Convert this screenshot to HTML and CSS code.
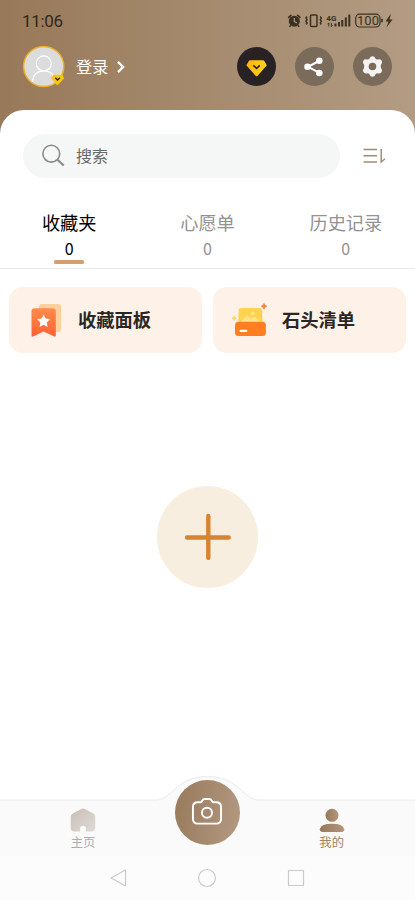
FILE: index.html
```html
<!DOCTYPE html>
<html lang="zh-CN">
<head>
<meta charset="utf-8">
<meta name="viewport" content="width=device-width, initial-scale=1">
<title>我的</title>
<link rel="stylesheet" href="styles.css">
</head>
<body>
<div class="app">
  <header class="header">
    <div class="status">
      <span class="time">11:06</span>
      <svg class="status-icons" width="108" height="18" viewBox="287 12 108 18" fill="none" stroke="#3c3022">
        <circle cx="294.300" cy="21.200" r="5.500" fill="#3c3022" stroke="none"/>
        <path d="M288.200 17.800l3.200-2.900M300.400 17.800l-3.200-2.900M290.700 25.300l-1.200 1.500M297.900 25.300l1.200 1.500" stroke-width="1.700"/>
        <path d="M294.300 18v3.500l2.600 1.600" stroke="#b19b82" stroke-width="1.200"/>
        <rect x="310.500" y="14.900" width="6.500" height="11.500" rx="1" stroke-width="1.500"/>
        <path d="M307 16.500l-1 1.600 1 1.600-1 1.600 1 1.600-1 1.600M320.300 16.500l1 1.600-1 1.600 1 1.600-1 1.600 1 1.600" stroke-width="1.500"/>
        <text x="326.300" y="20.500" class="net">4G</text>
        <path d="M328.800 26.500v-3.500M331.300 23v3.500M327.500 24.300l1.300-1.400M332.600 25.200l-1.300 1.400" stroke-width="1"/>
        <path d="M335.500 26.500v-3M339 26.500v-4.500M342.300 26.500v-6.500M345.800 26.500v-9M349.300 26.500v-12" stroke-width="2"/>
        <rect x="355.700" y="14.200" width="24.300" height="12.800" rx="4" stroke-width="1.200"/>
        <path d="M382 18.700v3.600" stroke-width="1.600"/>
        <text x="368" y="25" class="battery">100</text>
        <path d="M391 13.500l-5.500 8h3L386.500 27.500l6-8h-3z" fill="#3c3022" stroke="none"/>
      </svg>
    </div>
    <div class="user">
      <svg class="avatar" width="44" height="44" viewBox="22 45 44 44">
        <circle cx="43.700" cy="66.500" r="20.100" fill="#dcdcdc" stroke="#e8af29" stroke-width="1.500"/>
        <g fill="none" stroke="#fff" stroke-width="1.200"><circle cx="43.800" cy="63.400" r="7.500"/><path d="M32.300 82c.7-7 5-11.200 11.500-11.200S54.300 75 55.200 81"/></g>
        <path d="M53.300 74.800h8.900l2 3.500-6.700 7.200-6.500-7.200z" fill="#fcc60d"/>
        <path d="M55.200 77.800l2.300 2.200 2.400-2.200" fill="none" stroke="#382b18" stroke-width="1.500"/>
      </svg>
      <span class="login">登录</span>
      <svg class="chevron" width="10" height="14" viewBox="0 0 10 14"><path d="M2 1.800l5 5.200-5 5.200" fill="none" stroke="#fff" stroke-width="2.500"/></svg>
      <div class="actions">
        <span class="action vip"><svg width="39" height="39" viewBox="0 0 39 39"><defs><linearGradient id="gold"><stop stop-color="#ffb60d"/><stop offset="1" stop-color="#ffd51b"/></linearGradient></defs><path d="M13 13.300h13.200q.7 0 1.100.6l2.100 3.500q.5.900-.2 1.700l-8.600 9.700q-1 1.100-2 0L10 19.100q-.7-.8-.2-1.700l2.100-3.500q.4-.6 1.100-.6z" fill="url(#gold)"/><path d="M16.300 18.300l3.300 3 3.200-3" fill="none" stroke="#292225" stroke-width="1.600"/></svg></span>
        <span class="action"><svg width="39" height="39" viewBox="0 0 39 39" fill="#fff"><path d="M25 13.500l-12 6.300 12 6.400" fill="none" stroke="#fff" stroke-width="2"/><circle cx="24.300" cy="13.700" r="3.300"/><circle cx="12.500" cy="19.800" r="3.300"/><circle cx="24.300" cy="26" r="3.300"/></svg></span>
        <span class="action"><svg width="39" height="39" viewBox="0 0 39 39"><path d="M19.500 9.200q2.200 0 2.900 2.300.9 1.200 2.500 1 2.700-.6 3.800 1.300t-.7 3.900q-.6 1.700 0 3.400 1.800 2.100.7 4t-3.800 1.300q-1.600-.2-2.500 1-.7 2.300-2.900 2.300t-2.900-2.300q-.9-1.200-2.500-1-2.700.6-3.800-1.300t.7-4q.6-1.700 0-3.400-1.800-2-.7-3.900t3.800-1.300q1.600.2 2.500-1 .7-2.300 2.900-2.300z" fill="#f4f3f2"/><circle cx="19.500" cy="19.500" r="3.800" fill="#7b6b5a"/></svg></span>
      </div>
    </div>
  </header>

  <main class="panel">
    <div class="search-row">
      <div class="search">
        <svg width="24" height="24" viewBox="0 0 24 24" fill="none" stroke="#888a8c"><circle cx="10.300" cy="9.700" r="8.400" stroke-width="1.600"/><path d="M16.200 15.500l6.500 6" stroke-width="2.200"/></svg>
        <span class="placeholder">搜索</span>
      </div>
      <svg class="sort" width="24" height="18" viewBox="0 0 24 18" fill="none" stroke="#a58a70" stroke-width="1.500"><path d="M.5 2.500H14M.5 8.800H14M.5 15.100H14M18.200 2v13l3.800-3.200"/></svg>
    </div>
    <nav class="tabs">
      <div class="tab active"><span class="name">收藏夹</span><span class="count">0</span></div>
      <div class="tab"><span class="name">心愿单</span><span class="count">0</span></div>
      <div class="tab"><span class="name">历史记录</span><span class="count">0</span></div>
    </nav>
    <div class="cards">
      <div class="card">
        <svg width="36" height="36" viewBox="30 302 36 36"><defs><linearGradient id="mark" x1="0" y1="0" x2="0" y2="1"><stop stop-color="#ff8c4a"/><stop offset="1" stop-color="#ff6235"/></linearGradient></defs>
          <path d="M42 304h16q3 0 3 3v22q0 3-3 3H39v-25q0-3 3-3z" fill="#ffcf9d"/>
          <path d="M34.800 308.200h17.700q3.300 0 3.300 3.300v24q0 1.600-1.500 1l-10.700-5-10.600 5q-1.500.6-1.500-1v-24q0-3.300 3.300-3.300z" fill="url(#mark)"/>
          <path d="M43.600 314.500l2 4.100 4.500.6-3.300 3.200.8 4.500-4-2.200-4 2.200.8-4.500-3.300-3.200 4.500-.6z" fill="#fff"/>
        </svg>
        <span>收藏面板</span>
      </div>
      <div class="card">
        <svg width="36" height="36" viewBox="231 302 36 36">
          <rect x="238.500" y="308" width="23.800" height="20" rx="3" fill="#ffd34f"/>
          <path d="M240.500 322l6.500-7 4.300 4.200 3-3 6 5.800z" fill="#ffe488"/><circle cx="252.800" cy="313.300" r="1.700" fill="#ffe995"/>
          <rect x="235" y="321.800" width="30.900" height="14.300" rx="3.500" fill="#ff7f20"/><rect x="239.500" y="329.800" width="7.800" height="2.300" rx="1.100" fill="#fff"/>
          <path d="M264 303.300q.7 2.500 3 3-2.300.6-3 3.100-.7-2.500-3-3.100 2.300-.5 3-3z" fill="#f88534" stroke="#f88534" stroke-width=".6"/>
          <path d="M234.200 315.800q.6 2 2.300 2.500-1.700.6-2.300 2.500-.6-1.900-2.300-2.500 1.700-.5 2.300-2.500z" fill="#ffd469" stroke="#ffd469" stroke-width=".5"/>
        </svg>
        <span>石头清单</span>
      </div>
    </div>
    <div class="empty">
      <div class="add"><svg width="48" height="48" viewBox="0 0 48 48"><path d="M24.300 3v41.700M3 24.500h41.700" stroke="#d7832f" stroke-width="4.400" stroke-linecap="round"/></svg></div>
    </div>
  </main>

  <footer class="bottom">
    <svg class="hump" width="415" height="28" viewBox="0 0 415 28"><path d="M0 25H156C172 25 176 1.500 207.500 1.500S243 25 259 25H415V28H0z" fill="#fafafa"/><path d="M0 25H156C172 25 176 1.500 207.500 1.500S243 25 259 25H415" fill="none" stroke="#ebebeb"/></svg>
    <div class="nav">
      <div class="nav-item">
        <svg width="26" height="25" viewBox="0 0 26 25"><defs><linearGradient id="home" x2="1" y2="1"><stop stop-color="#c7bfb8"/><stop offset="1" stop-color="#dfdad6"/></linearGradient></defs><path d="M10.800 1.200q2.200-1.200 4.400 0l7.800 4.100q2.200 1.200 2.200 3.500V20q0 3.500-3.500 3.500h-5.800v-3q0-2.700-2.900-2.700t-2.900 2.700v3H4.300Q.8 23.500.8 20V8.800q0-2.300 2.200-3.500z" fill="url(#home)"/></svg>
        <span>主页</span>
      </div>
      <div class="camera">
        <svg width="32" height="29" viewBox="0.500 1 33 29" fill="none" stroke="#fff" stroke-width="2"><path d="M7.500 6h2.700q1 0 1.500-1l.5-.8q.8-1.500 2.300-1.500h5q1.500 0 2.300 1.500l.5.800q.5 1 1.500 1h2.700q5 0 5 5v12q0 5-5 5h-19q-5 0-5-5V11q0-5 5-5z"/><circle cx="17" cy="16.800" r="5.200"/></svg>
      </div>
      <div class="nav-item me">
        <svg width="26" height="25" viewBox="0 0 26 25"><defs><linearGradient id="person"><stop stop-color="#98785a"/><stop offset="1" stop-color="#b2977d"/></linearGradient></defs><g fill="url(#person)"><circle cx="13" cy="7.300" r="6.500"/><path d="M4.300 24q-3.500 0-3.500-2.800Q2 15.800 13 15.800t12.200 5.400q0 2.800-3.500 2.800z"/></g></svg>
        <span>我的</span>
      </div>
    </div>
    <div class="system">
      <svg width="20" height="20" viewBox="0 0 20 20"><path d="M2 10L16.500 2v16z"/></svg>
      <svg width="20" height="20" viewBox="0 0 20 20"><circle cx="10" cy="10" r="8.500"/></svg>
      <svg width="20" height="20" viewBox="0 0 20 20"><rect x="2.500" y="2.500" width="15" height="15"/></svg>
    </div>
  </footer>
</div>
</body>
</html>
```
FILE: styles.css
```css
* { box-sizing: border-box; }
body { margin: 0; font-family: "Noto Sans CJK SC", sans-serif; }
svg { display: block; flex: none; }
.app {
  width: 415px;
  height: 900px;
  display: flex;
  flex-direction: column;
  overflow: hidden;
  background: linear-gradient(90deg, #987959, #b29c83) top / 100% 160px no-repeat #fff;
}
.header { height: 110px; flex: none; }
.status {
  height: 42px;
  padding: 0 20px 0 22px;
  display: flex;
  align-items: center;
  justify-content: space-between;
}
.time { font: 400 17px/20px Roboto, sans-serif; color: #332719; letter-spacing: -.3px; }
.net { font: 700 8px Roboto, sans-serif; fill: #3c3022; stroke: none; }
.battery { font: 400 13px Roboto, sans-serif; fill: #3c3022; stroke: none; text-anchor: middle; }
.user { height: 50px; padding: 0 23.500px 0 22px; display: flex; align-items: center; }
.login { margin-left: 10px; padding-bottom: 2px; color: #fff; font-size: 16.200px; line-height: 24px; }
.chevron { margin-left: 8px; }
.actions { margin-left: auto; padding-bottom: 1px; display: flex; gap: 18.700px; }
.action { width: 39px; height: 39px; border-radius: 50%; background: #7b6b5a; }
.vip { background: #292225; }
.panel {
  flex: 1;
  display: flex;
  flex-direction: column;
  background: #fff;
  border-radius: 24px 24px 0 0;
  padding-top: 24px;
}
.search-row { height: 44px; padding: 0 28px 0 23px; display: flex; align-items: center; justify-content: space-between; }
.search {
  width: 317px;
  height: 44px;
  border-radius: 22px;
  background: #f5f7f6;
  padding-left: 18px;
  display: flex;
  align-items: center;
  gap: 11px;
  font-size: 16px;
  color: #686868;
}
.placeholder { padding-bottom: 2px; }
.tabs { height: 91px; padding-top: 31px; display: flex; border-bottom: 1px solid #e9e9e9; }
.tab { flex: 1; display: flex; flex-direction: column; align-items: center; color: #929292; }
.name { font-size: 18.200px; line-height: 26px; }
.count { width: 30px; height: 27px; font-size: 16px; line-height: 27px; text-align: center; }
.active { color: #000; }
.active::after { content: ""; width: 30px; height: 3.500px; margin-top: -2px; border-radius: 1.500px; background: #d3a06e; }
.cards { display: grid; grid-template-columns: 1fr 1fr; gap: 11px; padding: 18px 9px 0; }
.card {
  height: 66px;
  padding-left: 20.500px;
  display: flex;
  align-items: center;
  gap: 12.500px;
  border-radius: 14px;
  background: #fef1e7;
  font-size: 18.300px;
  font-weight: 700;
  color: #292725;
}
.card span { padding-bottom: 2px; }
.card + .card { padding-left: 18px; gap: 15px; }
.empty { padding-top: 133px; display: flex; justify-content: center; }
.add { width: 101.500px; height: 101.500px; border-radius: 50%; background: #f8eee0; display: grid; place-items: center; }
.bottom { flex: none; height: 125px; }
.nav { height: 53px; background: #fafafa; display: grid; grid-template-columns: 1fr 1fr 1fr; }
.nav-item {
  width: 60px;
  margin-left: 53px;
  padding-top: 5px;
  display: flex;
  flex-direction: column;
  align-items: center;
  font-size: 12.300px;
  line-height: 18px;
  color: #aaaeb5;
}
.me { margin-left: 25px; color: #a08264; }
.camera {
  width: 65px;
  height: 65px;
  margin-top: -23px;
  padding-bottom: 2px;
  justify-self: center;
  position: relative;
  border-radius: 50%;
  background: linear-gradient(100deg, #98795b, #b39a82);
  display: grid;
  place-items: center;
}
.system {
  height: 44px;
  background: #fcfcfc;
  padding: 11.500px 109.500px 0 108.500px;
  display: flex;
  justify-content: space-between;
}
.system svg { fill: none; stroke: #cbcbcb; stroke-width: 1.200; stroke-linejoin: round; }
```
